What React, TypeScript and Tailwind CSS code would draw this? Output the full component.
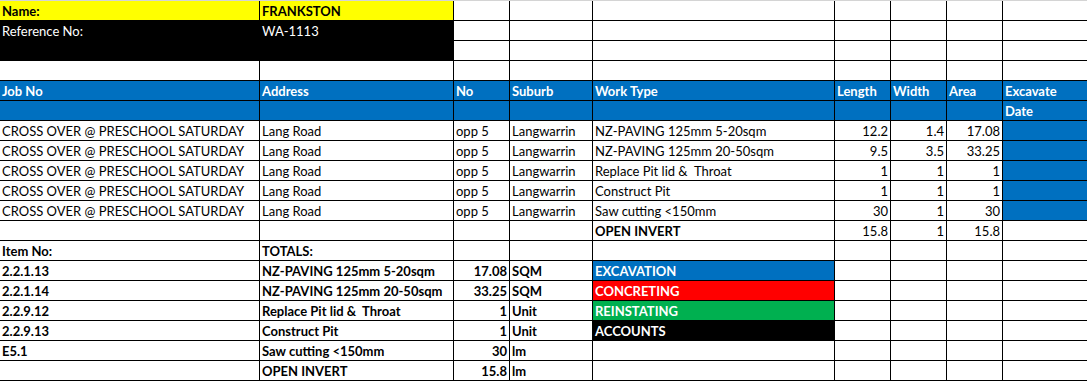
type Cell = {
  text?: string;
  right?: boolean;
  bold?: boolean;
  bg?: string;
  color?: string;
};

const E: Cell = {};
const blank = (n: number): Cell[] => Array.from({ length: n }, () => E);

const blueHead = 'bg-[#0070c0]';

const head = (text: string): Cell => ({ text, bold: true, bg: blueHead, color: 'text-white' });
const num = (text: string, bold = false): Cell => ({ text, right: true, bold });

const dataRows: [string, string, string, string][] = [
  ['NZ-PAVING 125mm 5-20sqm', '12.2', '1.4', '17.08'],
  ['NZ-PAVING 125mm 20-50sqm', '9.5', '3.5', '33.25'],
  ['Replace Pit lid &  Throat', '1', '1', '1'],
  ['Construct Pit', '1', '1', '1'],
  ['Saw cutting <150mm', '30', '1', '30'],
];

const totals: [string, string, string, string][] = [
  ['2.2.1.13', 'NZ-PAVING 125mm 5-20sqm', '17.08', 'SQM'],
  ['2.2.1.14', 'NZ-PAVING 125mm 20-50sqm', '33.25', 'SQM'],
  ['2.2.9.12', 'Replace Pit lid &  Throat', '1', 'Unit'],
  ['2.2.9.13', 'Construct Pit', '1', 'Unit'],
  ['E5.1', 'Saw cutting <150mm', '30', 'lm'],
  ['', 'OPEN INVERT', '15.8', 'lm'],
];

/** Stage legend shown beside the totals, one per totals row. */
const stages: Cell[] = [
  { text: 'EXCAVATION', bold: true, bg: 'bg-[#0070c0]', color: 'text-white' },
  { text: 'CONCRETING', bold: true, bg: 'bg-[#ff0000]', color: 'text-white' },
  { text: 'REINSTATING', bold: true, bg: 'bg-[#00b050]', color: 'text-white' },
  { text: 'ACCOUNTS', bold: true, bg: 'bg-black', color: 'text-white' },
  E,
  E,
];

function SheetCell({ cell }: { cell: Cell }) {
  return (
    <div
      className={[
        'overflow-hidden whitespace-pre px-[2px] leading-[20px]',
        cell.bg ?? 'bg-white',
        cell.color ?? 'text-black',
        cell.bold ? 'font-bold' : 'font-normal',
        cell.right ? 'text-right' : 'text-left',
      ].join(' ')}
    >
      {cell.text}
    </div>
  );
}

export default function App() {
  // Everything below the merged reference block, row by row.
  const rows: Cell[][] = [
    blank(9),
    [
      head('Job No'),
      head('Address'),
      head('No'),
      head('Suburb'),
      head('Work Type'),
      head('Length'),
      head('Width'),
      head('Area'),
      head('Excavate'),
    ],
    [...Array.from({ length: 8 }, () => ({ bg: blueHead })), head('Date')],
    ...dataRows.map(([work, len, wid, area]) => [
      { text: 'CROSS OVER @ PRESCHOOL SATURDAY' },
      { text: 'Lang Road' },
      { text: 'opp 5' },
      { text: 'Langwarrin' },
      { text: work },
      num(len),
      num(wid),
      num(area),
      { bg: blueHead },
    ]),
    [E, E, E, E, { text: 'OPEN INVERT', bold: true }, num('15.8'), num('1'), num('15.8'), E],
    [{ text: 'Item No:', bold: true }, { text: 'TOTALS:', bold: true }, ...blank(7)],
    ...totals.map(([item, desc, qty, unit], i) => [
      { text: item, bold: true },
      { text: desc, bold: true },
      num(qty, true),
      { text: unit, bold: true },
      stages[i],
      ...blank(4),
    ]),
  ];

  return (
    <div className="w-[1087px] h-[381px] overflow-hidden bg-white font-[Lato,'Liberation_Sans',sans-serif] text-[13px]">
      <div className="border-t border-[#d4d4d4] bg-black pb-px">
        <div className="grid grid-cols-[259px_193px_55px_82px_241px_55px_55px_55px_84px] auto-rows-[19px] gap-px">
          <SheetCell cell={{ text: 'Name:', bold: true, bg: 'bg-[#ffff00]' }} />
          <SheetCell cell={{ text: 'FRANKSTON', bold: true, bg: 'bg-[#ffff00]' }} />
          {blank(7).map((c, i) => (
            <SheetCell key={`r1-${i}`} cell={c} />
          ))}

          {/* merged reference block, two columns by two rows */}
          <div className="col-span-2 row-span-2 flex bg-black leading-[20px] text-white">
            <div className="w-[260px] px-[2px]">Reference No:</div>
            <div className="px-[2px]">WA-1113</div>
          </div>
          {blank(14).map((c, i) => (
            <SheetCell key={`r2-${i}`} cell={c} />
          ))}

          {rows.map((row, r) =>
            row.map((c, i) => <SheetCell key={`r${r + 4}-${i}`} cell={c} />)
          )}
        </div>
      </div>
    </div>
  );
}
